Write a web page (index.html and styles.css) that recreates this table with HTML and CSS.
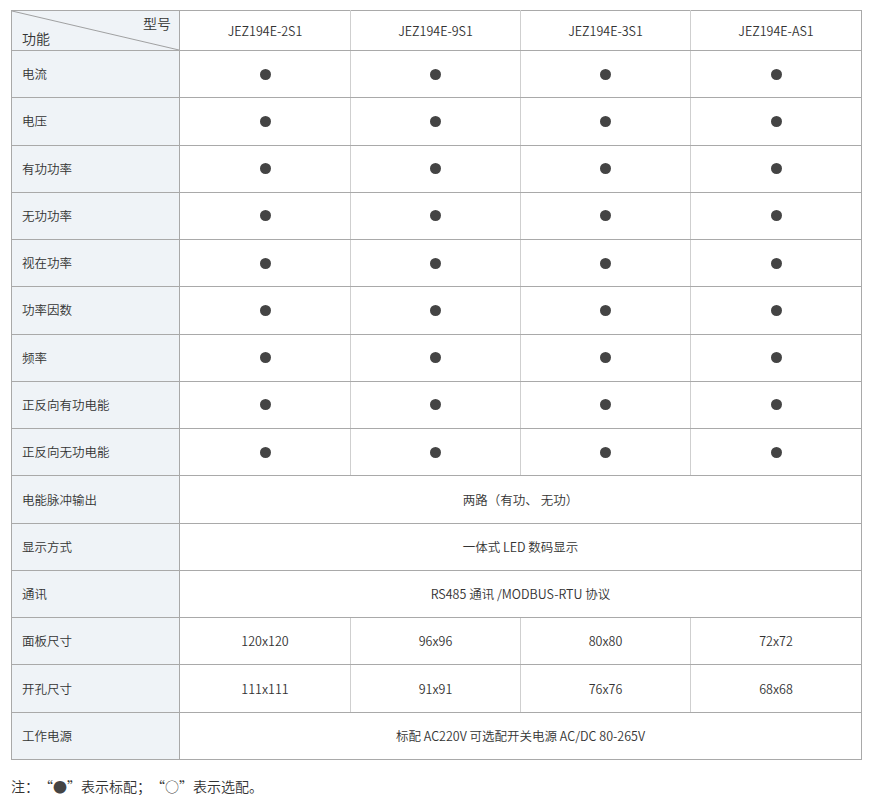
FILE: index.html
```html
<!DOCTYPE html>
<html lang="zh-CN">
<head>
<meta charset="utf-8">
<link rel="stylesheet" href="styles.css">
</head>
<body>
<div class="page">
<table class="spec">
  <colgroup>
    <col class="c-head"><col class="c-a"><col class="c-b"><col class="c-b"><col class="c-a">
  </colgroup>
  <thead>
    <tr class="hdr">
      <th class="diag">
        <svg class="diag-line" viewBox="0 0 168 40" preserveAspectRatio="none"><line x1="0" y1="0" x2="168" y2="40" stroke="#8a8a8a" stroke-width="0.8"/></svg>
        <span class="d-top">型号</span>
        <span class="d-bot">功能</span>
      </th>
      <th>JEZ194E-2S1</th>
      <th>JEZ194E-9S1</th>
      <th>JEZ194E-3S1</th>
      <th>JEZ194E-AS1</th>
    </tr>
  </thead>
  <tbody>
    <tr><td class="lbl">电流</td><td><i class="dot"></i></td><td><i class="dot"></i></td><td><i class="dot"></i></td><td><i class="dot"></i></td></tr>
    <tr><td class="lbl">电压</td><td><i class="dot"></i></td><td><i class="dot"></i></td><td><i class="dot"></i></td><td><i class="dot"></i></td></tr>
    <tr><td class="lbl">有功功率</td><td><i class="dot"></i></td><td><i class="dot"></i></td><td><i class="dot"></i></td><td><i class="dot"></i></td></tr>
    <tr><td class="lbl">无功功率</td><td><i class="dot"></i></td><td><i class="dot"></i></td><td><i class="dot"></i></td><td><i class="dot"></i></td></tr>
    <tr><td class="lbl">视在功率</td><td><i class="dot"></i></td><td><i class="dot"></i></td><td><i class="dot"></i></td><td><i class="dot"></i></td></tr>
    <tr><td class="lbl">功率因数</td><td><i class="dot"></i></td><td><i class="dot"></i></td><td><i class="dot"></i></td><td><i class="dot"></i></td></tr>
    <tr><td class="lbl">频率</td><td><i class="dot"></i></td><td><i class="dot"></i></td><td><i class="dot"></i></td><td><i class="dot"></i></td></tr>
    <tr><td class="lbl">正反向有功电能</td><td><i class="dot"></i></td><td><i class="dot"></i></td><td><i class="dot"></i></td><td><i class="dot"></i></td></tr>
    <tr><td class="lbl">正反向无功电能</td><td><i class="dot"></i></td><td><i class="dot"></i></td><td><i class="dot"></i></td><td><i class="dot"></i></td></tr>
    <tr><td class="lbl">电能脉冲输出</td><td colspan="4">两路（有功、 无功）</td></tr>
    <tr><td class="lbl">显示方式</td><td colspan="4">一体式 LED 数码显示</td></tr>
    <tr><td class="lbl">通讯</td><td colspan="4">RS485 通讯 /MODBUS-RTU 协议</td></tr>
    <tr><td class="lbl">面板尺寸</td><td>120x120</td><td>96x96</td><td>80x80</td><td>72x72</td></tr>
    <tr><td class="lbl">开孔尺寸</td><td>111x111</td><td>91x91</td><td>76x76</td><td>68x68</td></tr>
    <tr><td class="lbl">工作电源</td><td colspan="4">标配 AC220V 可选配开关电源 AC/DC 80-265V</td></tr>
  </tbody>
</table>
<p class="note">注：“<span class="mark">●</span>”表示标配；“<span class="mark">○</span>”表示选配。</p>
</div>
</body>
</html>
```
FILE: styles.css
```css
html, body {
  margin: 0;
  padding: 0;
  background: #fff;
}
body {
  font-family: "Noto Sans CJK SC", "Noto Sans", sans-serif;
  font-weight: 350;
  color: #333;
}
.page {
  padding: 10px 0 0 11px;
  width: 851px;
}
.spec {
  border-collapse: collapse;
  width: 851px;
  table-layout: fixed;
  font-size: 12.5px;
}
.c-head { width: 168px; }
.c-a { width: 171px; }
.c-b { width: 170px; }
.spec th, .spec td {
  border: 1px solid #cfcfcf;
  border-top-color: #a9a9a9;
  border-bottom-color: #a9a9a9;
  text-align: center;
  vertical-align: middle;
  padding: 0;
  font-weight: 350;
  color: #333;
  line-height: 18px;
}
.spec tr > :first-child { border-left-color: #a9a9a9; }
.spec tr > :last-child { border-right-color: #a9a9a9; }
.spec .lbl, .spec .diag {
  background: #eff3f7;
  border-right-color: #a9a9a9;
  text-align: left;
  padding-left: 10px;
}
.hdr { height: 40px; }
.spec tbody tr { height: 47.27px; }
.diag {
  position: relative;
}
.diag-line {
  position: absolute;
  left: 0;
  top: 0;
  width: 100%;
  height: 100%;
  display: block;
}
.d-top {
  position: absolute;
  right: 8px;
  top: 3px;
  font-size: 14px;
}
.d-bot {
  position: absolute;
  left: 10px;
  bottom: 3px;
  font-size: 14px;
}
.dot {
  display: block;
  margin: 0 auto;
  width: 11px;
  height: 11px;
  border-radius: 50%;
  background: #444;
}
.note {
  margin: 16px 0 0 0;
  font-size: 14px;
  color: #333;
  text-spacing-trim: space-all;
  font-feature-settings: "fwid" 0;
}
.mark {
  color: #444;
}
```
